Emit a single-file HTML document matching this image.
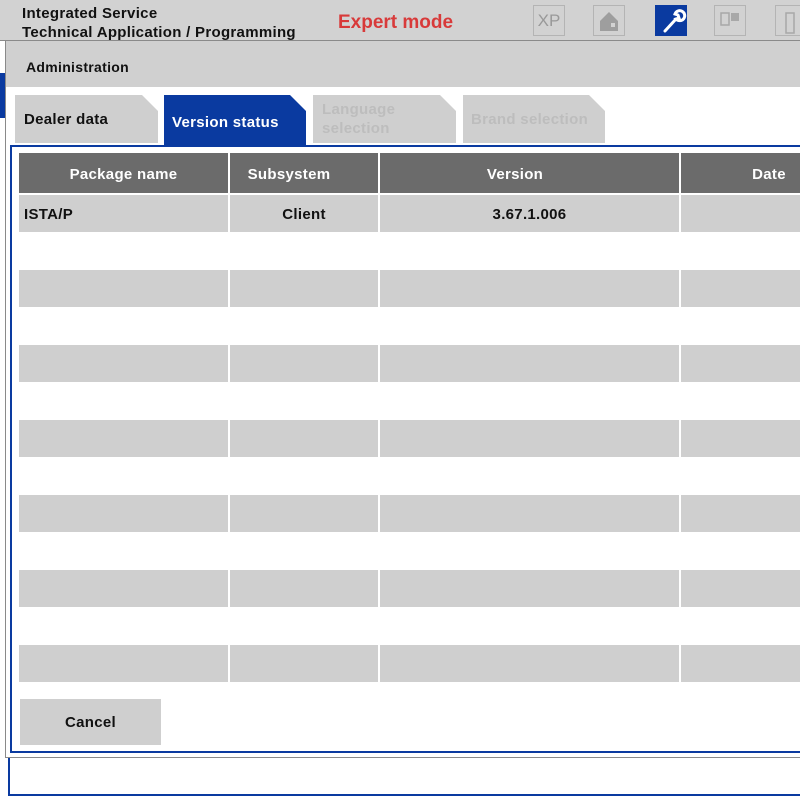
<!DOCTYPE html><html><head><style>
body{margin:0;width:800px;height:800px;overflow:hidden;background:#fff;font-family:"Liberation Sans",Arial,sans-serif;position:relative}
.a{position:absolute}
.t{font-weight:bold;font-size:15px;color:#111;letter-spacing:0.3px}
.ic{position:absolute;top:5px;width:32px;height:31px;border:1px solid #b4b4b4;box-sizing:border-box}
.row{position:absolute;left:19px;height:37px;width:781px}
.row div{position:absolute;top:0;height:37px;background:#cfcfcf}
</style></head><body>
<div class="a" style="left:0;top:0;width:800px;height:40px;background:#d2d2d2;border-bottom:1px solid #8a8a8a"></div>
<div class="a t" style="left:22px;top:4px;line-height:19px;font-size:15px">Integrated Service<br>Technical Application / Programming</div>
<div class="a" style="left:338px;top:12px;color:#d83a3a;font-weight:bold;font-size:19px">Expert mode</div>
<div class="ic" style="left:533px;color:#999;font-size:17px;text-align:center;line-height:29px">XP</div>
<div class="ic" style="left:593px"><svg width="30" height="29" viewBox="0 0 30 29"><path d="M6 15 L15 6 L24 15 V25 H6Z" fill="#9e9e9e"/><rect x="17" y="17" width="4" height="4" fill="#d2d2d2"/></svg></div>
<div class="ic" style="left:655px;background:#0a3aa0;border-color:#0a3aa0"><svg width="32" height="31" viewBox="0 0 32 31"><path d="M9 25 L20 13 M20 13 A5 5 0 1 0 19 8 L22 9 L23 12 L20 13Z" stroke="#fff" stroke-width="3" fill="none" stroke-linecap="round"/></svg></div>
<div class="ic" style="left:714px"><svg width="32" height="29"><rect x="6" y="7" width="8" height="12" fill="none" stroke="#a8a8a8" stroke-width="1.5"/><rect x="16" y="7" width="8" height="8" fill="#a8a8a8"/></svg></div>
<div class="ic" style="left:775px;width:30px"><svg width="30" height="29"><rect x="10" y="7" width="8" height="20" fill="none" stroke="#a8a8a8" stroke-width="1.5"/></svg></div>
<div class="a" style="left:0;top:73px;width:6px;height:45px;background:#0a3aa0"></div>
<div class="a" style="left:5px;top:41px;width:800px;height:716px;background:#fff;border-left:1px solid #8a8a8a;border-bottom:1px solid #8a8a8a"></div>
<div class="a" style="left:6px;top:41px;width:794px;height:46px;background:#d0d0d0"></div>
<div class="a t" style="left:26px;top:59px;font-size:14px">Administration</div>
<svg class="a" style="left:0;top:95px" width="620" height="50">
<path d="M15 0H142L158 16V48H15Z" fill="#cfcfcf"/>
<path d="M164 0H290L306 16V50H164Z" fill="#0a3aa0"/>
<path d="M313 0H440L456 16V48H313Z" fill="#cfcfcf"/>
<path d="M463 0H589L605 16V48H463Z" fill="#cfcfcf"/>
</svg>
<div class="a t" style="left:24px;top:111px">Dealer data</div>
<div class="a t" style="left:172px;top:114px;color:#fff">Version status</div>
<div class="a t" style="left:322px;top:100px;color:#bdbdbd;line-height:19px">Language<br>selection</div>
<div class="a t" style="left:471px;top:111px;color:#bdbdbd">Brand selection</div>
<div class="a" style="left:10px;top:145px;width:800px;height:608px;border:2px solid #0a3aa0;border-right:none;box-sizing:border-box"></div>
<div class="a" style="left:19px;top:153px;width:781px;height:40px;background:#6b6b6b"></div>
<div class="a" style="left:228px;top:153px;width:2px;height:530px;background:#fff"></div>
<div class="a" style="left:378px;top:153px;width:2px;height:530px;background:#fff"></div>
<div class="a" style="left:679px;top:153px;width:2px;height:530px;background:#fff"></div>
<div class="a t" style="left:19px;width:209px;top:166px;text-align:center;color:#fff">Package name</div>
<div class="a t" style="left:230px;width:118px;top:166px;text-align:center;color:#fff">Subsystem</div>
<div class="a t" style="left:380px;width:270px;top:166px;text-align:center;color:#fff">Version</div>
<div class="a t" style="left:681px;width:176px;top:166px;text-align:center;color:#fff">Date</div>
<div class="row" style="top:195px"><div style="left:0;width:209px"></div><div style="left:211px;width:148px"></div><div style="left:361px;width:299px"></div><div style="left:662px;width:120px"></div></div>
<div class="row" style="top:270px"><div style="left:0;width:209px"></div><div style="left:211px;width:148px"></div><div style="left:361px;width:299px"></div><div style="left:662px;width:120px"></div></div>
<div class="row" style="top:345px"><div style="left:0;width:209px"></div><div style="left:211px;width:148px"></div><div style="left:361px;width:299px"></div><div style="left:662px;width:120px"></div></div>
<div class="row" style="top:420px"><div style="left:0;width:209px"></div><div style="left:211px;width:148px"></div><div style="left:361px;width:299px"></div><div style="left:662px;width:120px"></div></div>
<div class="row" style="top:495px"><div style="left:0;width:209px"></div><div style="left:211px;width:148px"></div><div style="left:361px;width:299px"></div><div style="left:662px;width:120px"></div></div>
<div class="row" style="top:570px"><div style="left:0;width:209px"></div><div style="left:211px;width:148px"></div><div style="left:361px;width:299px"></div><div style="left:662px;width:120px"></div></div>
<div class="row" style="top:645px"><div style="left:0;width:209px"></div><div style="left:211px;width:148px"></div><div style="left:361px;width:299px"></div><div style="left:662px;width:120px"></div></div>
<div class="a t" style="left:24px;top:206px">ISTA/P</div>
<div class="a t" style="left:230px;width:148px;top:206px;text-align:center">Client</div>
<div class="a t" style="left:380px;width:299px;top:206px;text-align:center">3.67.1.006</div>
<div class="a" style="left:20px;top:699px;width:141px;height:46px;background:#cfcfcf"></div>
<div class="a t" style="left:20px;width:141px;top:714px;text-align:center">Cancel</div>
<div class="a" style="left:8px;top:758px;width:800px;height:38px;border:2px solid #0a3aa0;border-top:none;border-right:none;box-sizing:border-box"></div>
</body></html>
